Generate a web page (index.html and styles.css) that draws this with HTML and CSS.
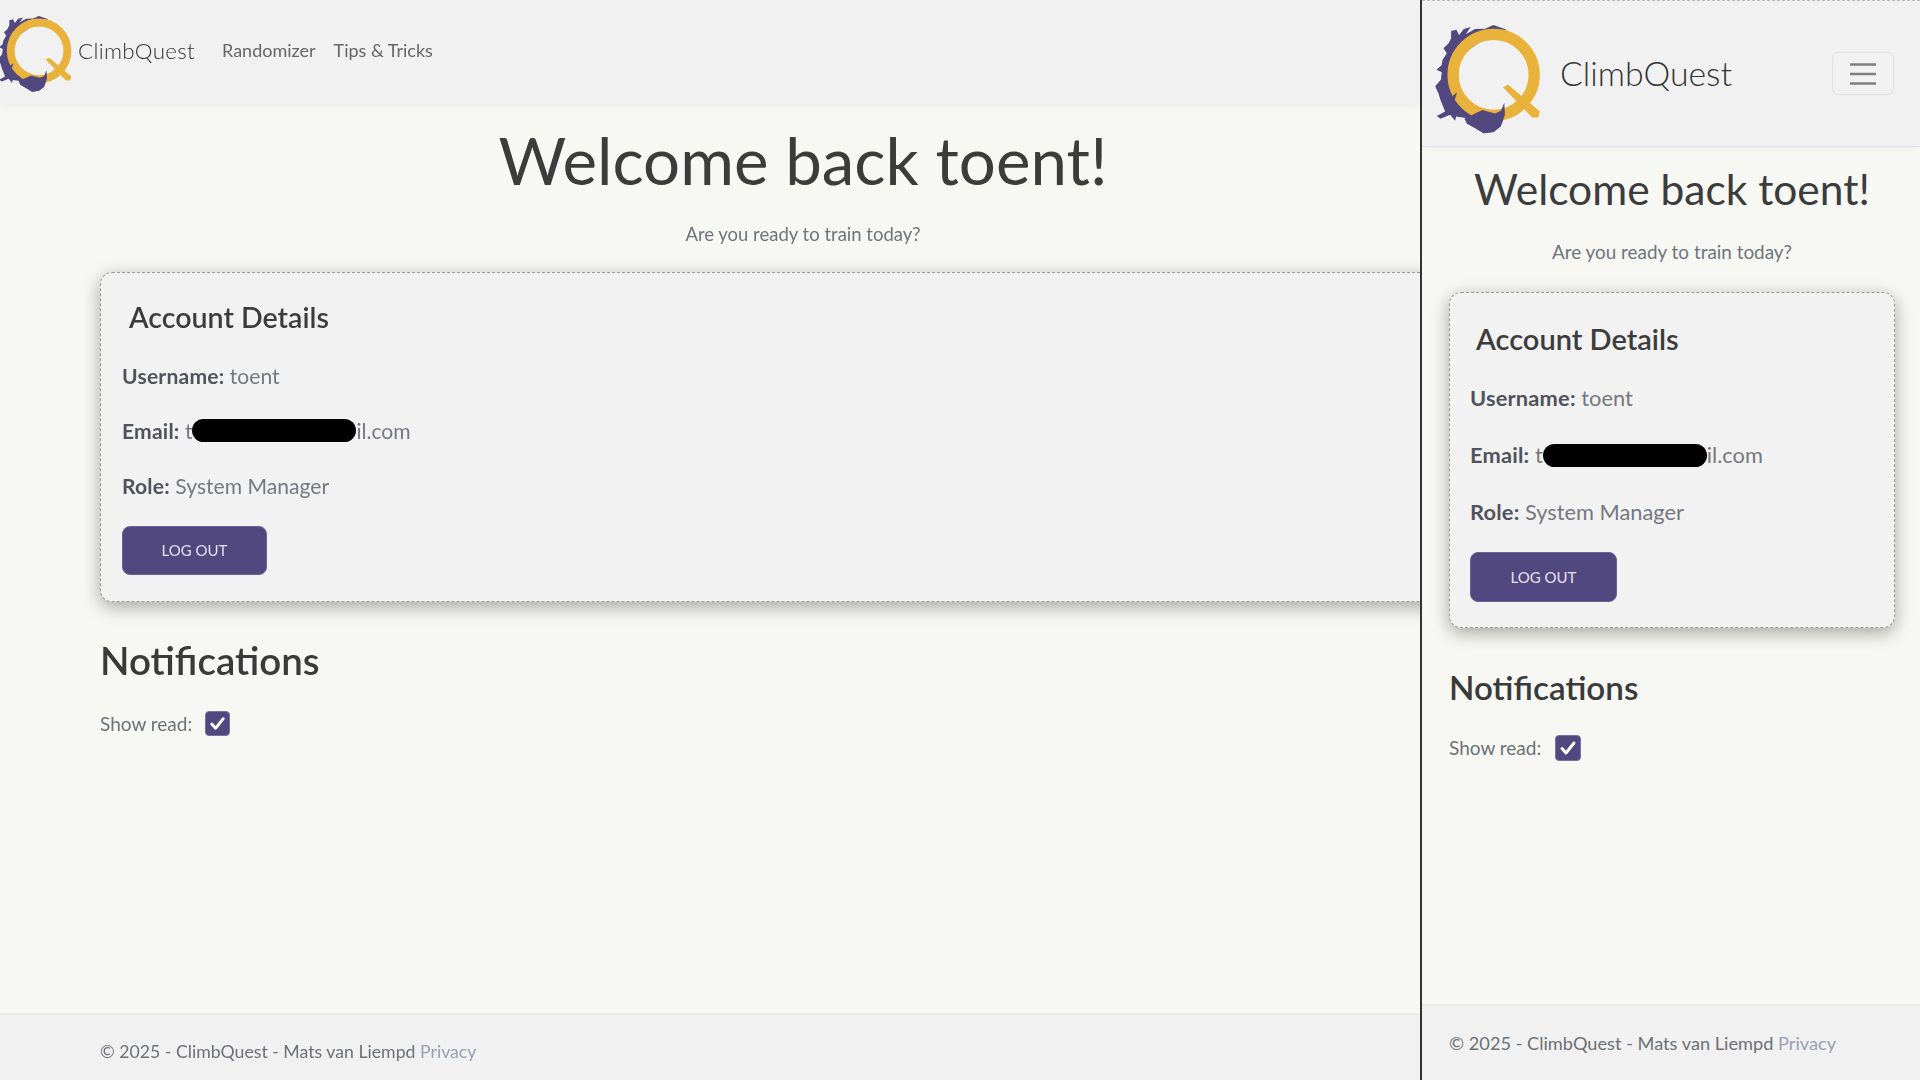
FILE: index.html
```html
<!DOCTYPE html>
<html lang="en">
<head>
<meta charset="utf-8">
<title>ClimbQuest</title>
<link rel="stylesheet" href="styles.css">
</head>
<body>
<svg class="defs" width="0" height="0" aria-hidden="true">
  <symbol id="logo" viewBox="30 30 330 340">
    <path class="logo-purple" d="M282 84 262 62 240 42 205 30 180 41 150 42 122 58 137 36 116 42 102 60 94 44 78 48 78 70 70 86 55 100 65 115 52 135 50 150 34 165 50 172 47 195 30 214 40 236 46 256 60 290 35 304 46 312 75 300 90 318 93 305 122 310 125 326 150 340 176 356 205 352 226 336 240 300 150 290 90 200 110 120 180 70 230 58Z"/>
    <circle class="logo-ring" cx="206" cy="180" r="122"/>
    <path class="logo-tail" d="M234 217 250 210 345 290 340 308 322 308Z"/>
    <path class="logo-purple" d="M118 312 150 296 172 286 210 296 228 288 238 264 240 300 228 334 206 352 176 356 150 340 126 326Z"/>
    <path class="logo-purple" d="M84 242 96 232 88 258 76 262Z"/>
  </symbol>
</svg>
<div class="screens">
  <section class="pane pane-wide">
    <header class="nav">
      <a class="brand"><svg class="logo"><use href="#logo"/></svg><span class="brand-name">ClimbQuest</span></a>
      <nav class="links"><a class="link">Randomizer</a><a class="link">Tips &amp; Tricks</a></nav>
    </header>
    <main class="main">
      <h1 class="title">Welcome back toent!</h1>
      <p class="lead">Are you ready to train today?</p>
      <div class="card">
        <h3 class="card-title">Account Details</h3>
        <p class="row"><b class="label">Username:</b> toent</p>
        <p class="row"><b class="label">Email:</b> t<span class="redact"></span>il.com</p>
        <p class="row"><b class="label">Role:</b> System Manager</p>
        <button class="btn">LOG OUT</button>
      </div>
      <h2 class="section">Notifications</h2>
      <div class="toggle"><span>Show read:</span><span class="check"><svg viewBox="0 0 24 24"><path d="M6 12.500l4 4.500 8-10"/></svg></span></div>
    </main>
    <footer class="footer"><span>© 2025 - ClimbQuest - Mats van Liempd</span> <a class="privacy">Privacy</a></footer>
  </section>
  <section class="pane pane-narrow">
    <header class="nav">
      <a class="brand"><svg class="logo"><use href="#logo"/></svg><span class="brand-name">ClimbQuest</span></a>
      <button class="burger"><svg viewBox="0 0 30 30"><path d="M2 5.500h26M2 15h26M2 24.500h26"/></svg></button>
    </header>
    <main class="main">
      <h1 class="title">Welcome back toent!</h1>
      <p class="lead">Are you ready to train today?</p>
      <div class="card">
        <h3 class="card-title">Account Details</h3>
        <p class="row"><b class="label">Username:</b> toent</p>
        <p class="row"><b class="label">Email:</b> t<span class="redact"></span>il.com</p>
        <p class="row"><b class="label">Role:</b> System Manager</p>
        <button class="btn">LOG OUT</button>
      </div>
      <h2 class="section">Notifications</h2>
      <div class="toggle"><span>Show read:</span><span class="check"><svg viewBox="0 0 24 24"><path d="M6 12.500l4 4.500 8-10"/></svg></span></div>
    </main>
    <footer class="footer"><span>© 2025 - ClimbQuest - Mats van Liempd</span> <a class="privacy">Privacy</a></footer>
  </section>
</div>
</body>
</html>
```
FILE: styles.css
```css
* { box-sizing: border-box; }
html, body { margin: 0; height: 100%; overflow: hidden; }
body { font-family: Lato, "Open Sans", sans-serif; color: #3a3a3a; background: #f7f8f3; }
.defs { position: absolute; }
.logo-purple { fill: #524880; }
.logo-ring { fill: none; stroke: #e9b23b; stroke-width: 34; }
.logo-tail { fill: #e9b23b; }

.screens { display: flex; height: 1080px; }
.pane { display: flex; flex-direction: column; overflow: hidden; background: #f7f8f3; }
.pane-wide { width: 1420px; flex: none; filter: blur(.5px); }
.pane-narrow { flex: 1; border-left: 2px solid #333; }

.nav { display: flex; align-items: center; background: #f1f1f1; flex: none; position: relative; }
.brand { display: flex; align-items: center; }
.logo { display: block; flex: none; }
.brand-name { font-weight: 300; color: #333; }
.link { color: #666; font-weight: 400; }
.links { display: flex; }

.main { flex: 1; display: flex; flex-direction: column; }
.title { margin: 0; font-weight: 400; text-align: center; line-height: 1.2; color: #3c3c3c; }
.lead { margin: 0; text-align: center; line-height: 26px; color: #70757b; }
.card { background: #f2f2f2; border: 1px dashed #999; border-radius: 12px; box-shadow: 0 5px 18px rgba(0,0,0,.33); display: flex; flex-direction: column; align-items: flex-start; flex: none; }
.card-title { margin: 0; font-weight: 600; line-height: 31px; color: #3c3c3c; }
.row { margin: 0; line-height: 26px; color: #74787f; display: flex; align-items: center; white-space: pre; }
.label { font-weight: 700; color: #50535c; letter-spacing: .2px; }
.redact { display: inline-block; width: 164px; height: 23px; background: #000; border-radius: 12px; }
.btn { background: #524880; color: #e6e2f0; border: 1px solid #6a6196; border-radius: 8px; font: 400 15px Lato, sans-serif; }
.section { margin: 0; font-weight: 600; line-height: 1.2; color: #3a3a3a; }
.toggle { display: flex; align-items: center; color: #6d7178; gap: 13px; }
.check { background: #524880; border: 1px solid #7a72a0; border-radius: 4px; display: block; }
.check svg { display: block; width: 100%; height: 100%; fill: none; stroke: #fff; stroke-width: 3; stroke-linecap: round; stroke-linejoin: round; }
.footer { flex: none; background: #f1f1f1; border-top: 2px solid #ebebe8; color: #6d7075; }
.privacy { color: #97a0b4; }
.burger { margin-left: auto; background: none; border: 1px solid #e0e0e2; border-radius: 6px; display: flex; align-items: center; justify-content: center; padding: 0; }
.burger svg { width: 30px; height: 30px; fill: none; stroke: #7f7f7f; stroke-width: 2.5; }

/* wide capture */
.pane-wide .nav { height: 104px; box-shadow: 0 2px 8px rgba(0,0,0,.05); }
.pane-wide .logo { width: 77px; height: 79px; margin: 7px 0 0 -2px; }
.pane-wide .brand-name { font-size: 22.4px; margin: 0 0 4px 3px; letter-spacing: .3px; }
.pane-wide .links { margin: 0 0 4px 27px; gap: 18px; font-size: 18px; }
.pane-wide .main { width: 1606px; padding: 0 100px; }
.pane-wide .title { font-size: 65.4px; margin-top: 17px; }
.pane-wide .lead { font-size: 18.5px; margin-top: 22px; }
.pane-wide .card { margin-top: 25px; height: 330px; padding: 29px 0 0 21px; }
.pane-wide .card-title { font-size: 28.6px; margin-left: 7px; }
.pane-wide .row { font-size: 21.1px; margin-top: 29.2px; }
.pane-wide .btn { width: 145px; height: 49px; margin-top: 26.500px; }
.pane-wide .section { font-size: 38.5px; margin-top: 35px; }
.pane-wide .toggle { font-size: 19px; margin-top: 27px; }
.pane-wide .check { width: 25px; height: 25px; }
.pane-wide .footer { height: 67px; padding: 26px 0 0 100px; font-size: 17.7px; }

/* narrow capture */
.pane-narrow .nav { height: 147px; border-top: 1px dashed #bbb; border-bottom: 1px solid #dfe0e6; padding: 0 26px 0 13px; box-shadow: 0 2px 6px rgba(0,0,0,.04); }
.pane-narrow .logo { width: 110px; height: 113px; margin-top: 16px; }
.pane-narrow .brand-name { font-size: 33.8px; margin: 0 0 2px 15px; }
.pane-narrow .burger { width: 62px; height: 43px; }
.pane-narrow .main { padding: 0 25px 0 27px; }
.pane-narrow .title { font-size: 42.5px; margin-top: 16px; }
.pane-narrow .lead { font-size: 18.9px; margin-top: 25px; }
.pane-narrow .card { margin-top: 27px; height: 336px; padding: 30px 0 0 20px; }
.pane-narrow .card-title { font-size: 29px; margin-left: 6px; }
.pane-narrow .row { font-size: 21.8px; margin-top: 31px; }
.pane-narrow .btn { width: 147px; height: 50px; margin-top: 27px; }
.pane-narrow .section { font-size: 33.2px; margin-top: 40px; }
.pane-narrow .toggle { font-size: 19px; margin-top: 27px; gap: 14px; }
.pane-narrow .check { width: 26px; height: 26px; }
.pane-narrow .footer { height: 76px; padding: 26px 0 0 27px; font-size: 18.2px; }
```
